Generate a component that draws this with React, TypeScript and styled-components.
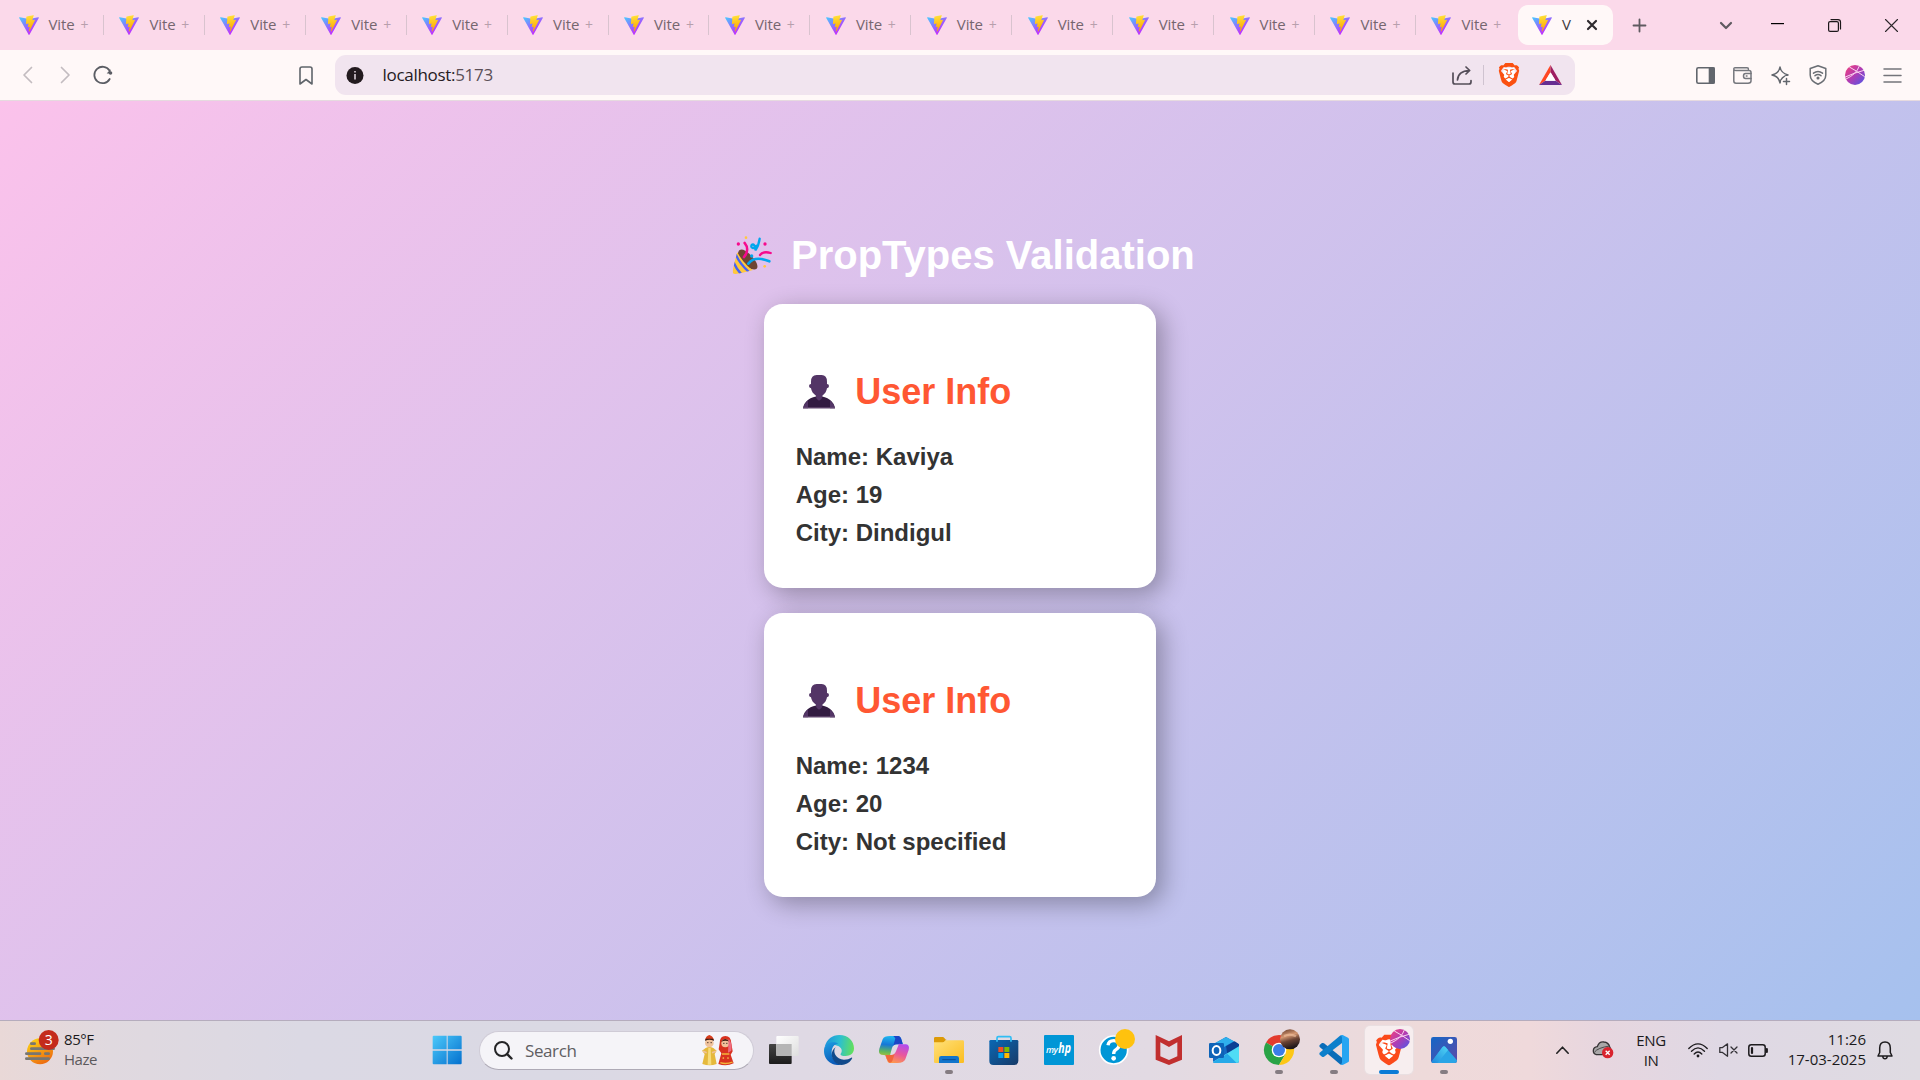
import React from "react";
import styled, { createGlobalStyle } from "styled-components";
import { SiBrave } from "react-icons/si";

const Global = createGlobalStyle`
  * { box-sizing: border-box; }
  html, body { margin: 0; padding: 0; }
  body { width: 1920px; height: 1080px; overflow: hidden; font-family: "Liberation Sans", Arial, sans-serif; }
  svg { display: block; flex: none; overflow: visible; }
`;

const uiFont = `"Open Sans", "Noto Sans", sans-serif`;

const Screen = styled.div`
  width: 1920px;
  height: 1080px;
  display: flex;
  flex-direction: column;
`;

/* ---------- tab strip ---------- */
const TabStrip = styled.header`
  height: 50px;
  background: #fbd9ea;
  display: flex;
  align-items: center;
  font: 400 15px/20px ${uiFont};
  color: #75666f;
`;
const Tabs = styled.div`
  width: 1518px;
  height: 50px;
  padding-left: 3px;
  display: flex;
  align-items: center;
`;
const Tab = styled.div<{ $last?: boolean }>`
  width: 100.93px;
  height: 20px;
  flex: none;
  padding-left: 15.5px;
  display: flex;
  align-items: center;
  border-right: 1px solid ${(p) => (p.$last ? "transparent" : "#d9c3cf")};
`;
const TabLabel = styled.span<{ $active?: boolean }>`
  margin-left: 10px;
  padding-bottom: 2px;
  letter-spacing: -0.1px;
  white-space: pre;
  color: ${(p) => (p.$active ? "#3f3a3e" : "inherit")};
`;
const Faded = styled.span`
  margin-left: 2px;
  opacity: 0.5;
  font-size: 14px;
`;
const ActiveTab = styled.div`
  width: 94.5px;
  height: 40px;
  padding-left: 14px;
  border-radius: 10px;
  background: #fff8f8;
  display: flex;
  align-items: center;
`;
const TabClose = styled.div`
  margin-left: 16.5px;
`;
const Slot = styled.div<{ $w: number }>`
  width: ${(p) => p.$w}px;
  flex: none;
  display: flex;
  align-items: center;
  justify-content: center;
`;
const StripControls = styled.div`
  display: flex;
  align-items: center;
  flex: 1;
`;
const Push = styled.div`
  flex: 1;
`;

/* ---------- toolbar ---------- */
const Toolbar = styled.nav`
  height: 51px;
  background: #fff8f8;
  border-bottom: 1px solid #e6dadf;
  display: flex;
  align-items: center;
`;
const NavGroup = styled.div`
  width: 335px;
  padding-left: 8px;
  display: flex;
  align-items: center;
`;
const Address = styled.div`
  width: 1240px;
  height: 40px;
  border-radius: 11px;
  background: #f1e4ef;
  display: flex;
  align-items: center;
  padding-left: 11px;
`;
const Url = styled.span`
  margin-left: 18.5px;
  font: 400 17px/24px ${uiFont};
  letter-spacing: -0.3px;
  color: #251a22;
`;
const Port = styled.span`
  color: #5b4f57;
`;
const Divider = styled.div`
  width: 1px;
  height: 20px;
  background: #cfc3d0;
`;
const Extensions = styled.div`
  flex: 1;
  display: flex;
  justify-content: flex-end;
  padding-right: 9px;
`;

/* ---------- page ---------- */
const Page = styled.main`
  flex: 1;
  display: flex;
  flex-direction: column;
  align-items: center;
  padding-top: 131px;
  background: linear-gradient(135deg, #fbc2eb, #a6c1ee);
`;
const Title = styled.h1`
  width: 470px;
  margin: 0 0 26px;
  padding-left: 7px;
  display: flex;
  align-items: center;
  gap: 18.3px;
  font-size: 40px;
  line-height: 46px;
  color: #fff;
  white-space: nowrap;
`;
const Card = styled.section`
  width: 392px;
  height: 284px;
  margin-bottom: 25px;
  padding: 67px 30px 0 31.7px;
  border-radius: 18.75px;
  background: #fff;
  box-shadow: 6.25px 6.25px 25px rgba(0, 0, 0, 0.3);
`;
const CardTitle = styled.h2`
  margin: 0 0 25px;
  padding-left: 7.3px;
  display: flex;
  align-items: center;
  gap: 20.3px;
  font-size: 36px;
  line-height: 42px;
  color: #ff5733;
`;
const Field = styled.p`
  margin: 0;
  font-size: 24px;
  line-height: 38px;
  font-weight: 700;
  color: #333;
`;

/* ---------- taskbar ---------- */
const Taskbar = styled.footer`
  height: 60px;
  border-top: 1px solid #b5acbd;
  display: flex;
  align-items: flex-start;
  padding-top: 5px;
  font: 400 15px/20px ${uiFont};
  color: #1b1a1c;
  background: linear-gradient(90deg, #e9d8d7 0, #e0d9df 110px, #dbd9e4 300px, #dad9e4 560px, #dfd9e4 800px, #e2dae3 1150px, #eedada 1420px, #efd9db 1530px, #e7d6df 1600px, #dfd8e4 1720px, #dfdbe2 1920px);
`;
const Weather = styled.div`
  width: 419.5px;
  height: 48px;
  padding-left: 24px;
  display: flex;
  align-items: center;
`;
const Lines = styled.div<{ $align?: string; $w?: number; $ml?: number; $ls?: number; $lift?: number }>`
  display: flex;
  flex-direction: column;
  width: ${(p) => (p.$w ? p.$w + "px" : "auto")};
  margin-left: ${(p) => p.$ml ?? 0}px;
  padding-bottom: ${(p) => p.$lift ?? 0}px;
  text-align: ${(p) => p.$align ?? "left"};
  letter-spacing: ${(p) => p.$ls ?? -0.15}px;
`;
const Muted = styled.span`
  color: #5c595c;
`;
const SearchBox = styled.div`
  width: 274.5px;
  height: 39px;
  margin: 5px 3px 0 4.5px;
  padding: 0 19px 0 14px;
  border-radius: 20px;
  background: #f5f4f8;
  border: 1px solid #cfcbd6;
  border-bottom-color: #aeaab6;
  display: flex;
  align-items: center;
`;
const SearchText = styled.span`
  margin-left: 12px;
  font-size: 17px;
  letter-spacing: -0.4px;
  color: #5f5e62;
`;
const AppCell = styled.div`
  width: 55px;
  height: 48px;
  flex: none;
  display: flex;
  justify-content: center;
`;
const AppButton = styled.div<{ $active?: boolean }>`
  width: 48px;
  height: 48px;
  padding-top: 4px;
  border-radius: 5px;
  display: flex;
  flex-direction: column;
  align-items: center;
  background: ${(p) => (p.$active ? "#f7eeef" : "transparent")};
  box-shadow: ${(p) => (p.$active ? "0 0 0 1px #e9dfe1" : "none")};
`;
const Indicator = styled.div<{ $active?: boolean }>`
  width: ${(p) => (p.$active ? 20 : 8)}px;
  height: 4px;
  border-radius: 2px;
  background: ${(p) => (p.$active ? "#0b7bd6" : "#857c82")};
`;
const Tray = styled.div`
  margin-left: auto;
  height: 48px;
  display: flex;
  align-items: center;
  padding-right: 16px;
`;

const ViteLogo = () => (
  <svg width="20" height="20" viewBox="6 0 398 396" preserveAspectRatio="none">
    <defs>
      <linearGradient id="va" x1="6" y1="33" x2="235" y2="344" gradientUnits="userSpaceOnUse">
        <stop stopColor="#41D1FF" />
        <stop offset="1" stopColor="#BD34FE" />
      </linearGradient>
      <linearGradient id="vb" x1="194.6" y1="8.8" x2="236" y2="293" gradientUnits="userSpaceOnUse">
        <stop stopColor="#FFEA83" />
        <stop offset=".083" stopColor="#FFDD35" />
        <stop offset="1" stopColor="#FFA800" />
      </linearGradient>
    </defs>
    <path fill="url(#va)" d="M399.641 59.5246L215.643 388.545C211.844 395.338 202.084 395.378 198.228 388.618L10.5817 59.5563C6.38087 52.1896 12.6802 43.2665 21.0281 44.7586L205.223 77.6824C206.398 77.8924 207.601 77.8904 208.776 77.6763L389.119 44.8058C397.439 43.2894 403.768 52.1434 399.641 59.5246Z" />
    <path fill="url(#vb)" d="M292.965 1.5744L156.801 28.2552C154.563 28.6937 152.906 30.5903 152.771 32.8664L144.395 174.33C144.198 177.662 147.258 180.248 150.51 179.498L188.42 170.749C191.967 169.931 195.172 173.055 194.443 176.622L183.18 231.775C182.422 235.487 185.907 238.661 189.532 237.56L212.947 230.446C216.577 229.344 220.065 232.527 219.297 236.242L201.398 322.875C200.278 328.294 207.486 331.249 210.492 326.603L212.5 323.5L323.454 102.072C325.312 98.3645 322.108 94.137 318.036 94.9228L279.014 102.454C275.347 103.161 272.227 99.746 273.262 96.1583L298.731 7.86689C299.767 4.27314 296.636 0.855181 292.965 1.5744Z" />
  </svg>
);

const Stroke = ({ w, h, color = "#5f5a60", sw = 1.6, children }: { w: number; h: number; color?: string; sw?: number; children: React.ReactNode }) => (
  <svg width={w} height={h} viewBox={`0 0 ${w} ${h}`} fill="none" stroke={color} strokeWidth={sw} strokeLinecap="round" strokeLinejoin="round">
    {children}
  </svg>
);

const Avatar = ({ cx, cy, r }: { cx: number; cy: number; r: number }) => (
  <g transform={`translate(${cx} ${cy}) scale(${r / 30})`}>
    <circle r="30" fill="url(#avatarFill)" />
    <g fill="none" stroke="#fbd3f0" strokeWidth="3">
      <path d="M-29 6Q-4-6 27-14M-17-24Q2-14 29 5M-27 12Q4-2 13-27" />
    </g>
  </g>
);

const SharedDefs = () => (
  <svg width="0" height="0" style={{ position: "absolute" }}>
    <defs>
      <linearGradient id="avatarFill" x1="0" y1="0" x2="1" y2="1">
        <stop offset="0" stopColor="#f5407a" />
        <stop offset=".5" stopColor="#b03cb4" />
        <stop offset="1" stopColor="#4a58ea" />
      </linearGradient>
    </defs>
  </svg>
);

const PartyPopper = () => (
  <svg width="40.7" height="40" viewBox="36 46 122 120">
    <defs>
      <clipPath id="cone">
        <path d="M52 98C50 102 38 150 38 156Q38 164 47 163Q62 161 99 151C84 143 64 120 52 98Z" />
      </clipPath>
    </defs>
    <path d="M55 97C60 84 74 90 88 102C104 117 118 138 110 147C102 154 80 145 66 128C56 116 51 104 55 97Z" fill="#6d4534" />
    <g clipPath="url(#cone)">
      <rect x="34" y="90" width="80" height="80" fill="#ffc83d" />
      <path d="M47 104Q60 134 88 158M40 127Q50 150 66 166" stroke="#4562f5" strokeWidth="7" fill="none" />
    </g>
    <g fill="none" strokeWidth="8" strokeLinecap="round">
      <path d="M74 70C84 82 84 98 72 112" stroke="#f70a8d" />
      <path d="M120 106C126 98 138 96 152 100" stroke="#f70a8d" strokeWidth="7" />
      <path d="M85 132C98 115 122 114 148 125" stroke="#00a6ed" />
      <path d="M119 57C117 72 112 84 106 92C108 78 100 72 95 76C90 84 102 90 110 78" stroke="#00a6ed" strokeWidth="7" />
    </g>
    <circle cx="78" cy="54" r="4" fill="#ffc83d" />
    <circle cx="134" cy="140" r="4" fill="#ffc83d" />
    <circle cx="55" cy="73" r="5" fill="#f70a8d" />
    <circle cx="135" cy="73" r="5" fill="#f70a8d" />
    <circle cx="95" cy="109" r="5" fill="#00a6ed" />
  </svg>
);

const Bust = () => (
  <svg width="32" height="33.3" viewBox="249 464 96 100">
    <path d="M249 564C252 544 272 528 297 528S342 544 345 564Z" fill="#321b41" />
    <path d="M249 564Q252 550 264 540V564ZM345 564Q342 550 330 540V564Z" fill="#533566" />
    <path d="M249 561H345V564H249Z" fill="#6b5078" />
    <path d="M273 491V484Q273 464 290 464H305Q321 464 321 484V491Q327 491 327 497T321 504Q319 518 307 526V530Q307 536 297 541Q288 536 288 530V526Q275 518 273 504Q267 503 267 497T273 491Z" fill="#533566" />
  </svg>
);

type Art = { cx: number; art: React.ReactNode; running?: boolean; active?: boolean };

const apps: Art[] = [
  {
    cx: 1092,
    art: (
      <>
        <defs>
          <linearGradient id="tv" x1="0" y1="0" x2="1" y2="1"><stop stopColor="#fff" /><stop offset="1" stopColor="#dedede" /></linearGradient>
          <linearGradient id="tb" x1="0" y1="0" x2="0" y2="1"><stop stopColor="#454545" /><stop offset="1" stopColor="#1c1c1c" /></linearGradient>
        </defs>
        <rect x="1047" y="87" width="68" height="60" rx="3" fill="url(#tb)" />
        <rect x="1069" y="63" width="67" height="60" rx="3" fill="url(#tv)" />
        <path d="M1069 87H1115V123H1072Q1069 123 1069 120Z" fill="#b5b5b5" />
      </>
    ),
  },
  {
    cx: 117,
    art: (
      <>
        <defs>
          <linearGradient id="eg" x1="0" y1=".4" x2="1" y2=".5"><stop stopColor="#1c93dc" /><stop offset=".5" stopColor="#2cbfd0" /><stop offset="1" stopColor="#63e05a" /></linearGradient>
          <linearGradient id="eb" x1="0" y1="0" x2=".4" y2="1"><stop stopColor="#1e9de2" /><stop offset="1" stopColor="#0a5ab8" /></linearGradient>
        </defs>
        <path d="M74 96C80 72 97 60 118 60C145 60 162 79 162 100C162 117 149 123 137 123C126 123 120 120 122 116C129 108 125 96 112 92C96 86 80 88 74 96Z" fill="url(#eg)" />
        <path d="M73 98C82 80 104 78 116 86C106 84 95 96 95 112C95 134 112 150 126 149C98 155 66 134 73 98Z" fill="url(#eb)" />
        <path d="M107 97C96 110 108 134 132 134C142 134 148 131 154 128C158 127 157 131 154 134C144 149 122 155 108 144C92 132 91 107 107 97Z" fill="#114a8b" />
      </>
    ),
  },
  {
    cx: 282,
    art: (
      <>
        <defs>
          <linearGradient id="c1" x1=".3" y1="0" x2=".2" y2="1"><stop stopColor="#1eb6ef" /><stop offset=".35" stopColor="#1677d8" /><stop offset=".65" stopColor="#62b85a" /><stop offset="1" stopColor="#f0c51d" /></linearGradient>
          <linearGradient id="c2" x1=".7" y1="0" x2=".3" y2="1"><stop stopColor="#b14cf0" /><stop offset=".5" stopColor="#e9579d" /><stop offset="1" stopColor="#ff9b4a" /></linearGradient>
        </defs>
        <path d="M270 63H296Q302 64 305 76L309 88H290Q280 88 276 99L267 132Q263 143 256 121Q251 119 244 119Q234 116 238 101L248 73Q252 63 270 63Z" fill="url(#c1)" />
        <path d="M280 63H296Q302 64 305 76L308 88H291Q283 88 280 92L286 70Z" fill="#1b45c6" />
        <path d="M292 144H268Q262 142 260 132L256 120H274Q284 120 288 109L297 86Q301 87 308 88H318Q330 90 326 105L316 133Q312 144 292 144Z" fill="url(#c2)" />
        <path d="M257 120H275Q282 120 284 116L277 138Q273 146 266 142Q261 136 257 120Z" fill="#f0663c" />
      </>
    ),
  },
  {
    cx: 447,
    running: true,
    art: (
      <>
        <defs>
          <linearGradient id="fo" x1="0" y1="0" x2="1" y2="1"><stop stopColor="#ffe079" /><stop offset="1" stopColor="#fbbd1f" /></linearGradient>
        </defs>
        <path d="M402 70Q402 66 406 66H428Q431 66 433 69L439 76H402Z M402 74H440L430 84H402Z" fill="#dc9a07" />
        <path d="M402 82H428Q432 82 434 79L436 76H488Q492 76 492 80V141Q492 144 488 144H406Q402 144 402 141Z" fill="url(#fo)" />
        <path d="M417 144V130Q417 123 424 123H470Q477 123 477 130V144Z" fill="#1275cc" />
        <path d="M428 134H466" stroke="#0a4c95" strokeWidth="3" strokeLinecap="round" />
      </>
    ),
  },
  {
    cx: 611,
    art: (
      <>
        <defs>
          <linearGradient id="st" x1="0" y1="0" x2="1" y2="1"><stop stopColor="#0a68b4" /><stop offset="1" stopColor="#173a68" /></linearGradient>
        </defs>
        <path d="M567 79Q567 75 571 75H650Q654 75 654 79V138Q654 150 642 150H579Q567 150 567 138Z" fill="url(#st)" />
        <path d="M590 80V69Q590 65 594 65H628Q632 65 632 69V80" fill="none" stroke="#31bdf4" strokeWidth="5" />
        <path d="M594 96H609V111H594Z" fill="#f25022" />
        <path d="M612 96H627V111H612Z" fill="#7fba00" />
        <path d="M594 114H609V129H594Z" fill="#00a4ef" />
        <path d="M612 114H627V129H612Z" fill="#ffb900" />
      </>
    ),
  },
  {
    cx: 777,
    art: (
      <>
        <rect x="732" y="60" width="90" height="90" rx="3" fill="#0096d6" />
        <text x="738" y="113" fontSize="27" fontFamily="Open Sans, sans-serif" fontStyle="italic" fontWeight="600" fill="#fff" textLength="36">my</text>
        <text x="775" y="115" fontSize="42" fontFamily="Open Sans, sans-serif" fontStyle="italic" fontWeight="700" fill="#fff" textLength="38" lengthAdjust="spacingAndGlyphs">hp</text>
      </>
    ),
  },
  {
    cx: 942,
    art: (
      <>
        <circle cx="941" cy="105" r="42" fill="#0096d6" stroke="#fff" strokeWidth="5" />
        <path d="M924 91Q926 77 941 77Q957 77 957 91Q957 99 948 104Q941 108 941 117" fill="none" stroke="#fff" strokeWidth="10" />
        <circle cx="941" cy="130" r="7" fill="#fff" />
        <circle cx="975" cy="72" r="30" fill="#ffc20e" />
      </>
    ),
  },
  {
    cx: 87,
    art: (
      <path fillRule="evenodd" d="M47 60L87 79L126 60V134L87 150L47 134ZM61 82V124L87 135L112 124V82L87 96Z" fill="#c12f2f" />
    ),
  },
  {
    cx: 252,
    art: (
      <>
        <path d="M219 88L258 66L297 88V138Q297 144 291 144H225Q219 144 219 138Z" fill="#1469c3" />
        <path d="M222 86L258 66L282 79L240 103Z" fill="#2fb0ec" />
        <path d="M258 94L284 79L297 88V94L262 117Z" fill="#0b3f94" />
        <path d="M297 94V138Q297 144 291 144H225L219 140Z" fill="#4fdcf5" />
        <path d="M219 141L262 116L290 144H225Q219 144 219 141Z" fill="#26a9e8" />
        <rect x="207" y="84" width="45" height="45" rx="4" fill="#0d63b8" />
        <ellipse cx="229.500" cy="106.500" rx="11.500" ry="13.500" fill="none" stroke="#fff" strokeWidth="6" />
      </>
    ),
  },
  {
    cx: 417,
    running: true,
    art: (
      <>
        <defs>
          <linearGradient id="ph" x1="0" y1="0" x2=".3" y2="1"><stop stopColor="#5c3424" /><stop offset=".4" stopColor="#d69872" /><stop offset=".65" stopColor="#6b4334" /><stop offset="1" stopColor="#20181a" /></linearGradient>
        </defs>
        <path d="M417 105L378 82.500A45 45 0 0 1 456 82.500Z" fill="#e33b2e" />
        <path d="M378 82.500A45 45 0 0 0 417 150L437 116Z" fill="#29a346" />
        <path d="M456 82.500A45 45 0 0 1 417 150L437 116L417 84H457Z" fill="#fdc716" />
        <circle cx="417" cy="105" r="22" fill="#fff" />
        <circle cx="417" cy="105" r="18" fill="#3b7de8" />
        <circle cx="450" cy="73" r="30" fill="url(#ph)" />
        <path d="M432 63Q450 54 468 64" fill="none" stroke="#f1c3a1" strokeWidth="7" opacity=".6" />
      </>
    ),
  },
  {
    cx: 582,
    running: true,
    art: (
      <>
        <path d="M539 90L546 84Q549 83 552 85L606 128V148Q604 150 600 148L539 96Q537 93 539 90Z" fill="#0a6cb8" />
        <path d="M539 119L546 125Q549 127 552 125L606 84V62Q604 59 600 62L539 113Q537 116 539 119Z" fill="#0d7fcb" />
        <path d="M601 62Q604 59 608 60L624 68Q627 70 627 73V137Q627 140 624 142L608 150Q604 150 601 148Q606 148 606 142V68Q606 62 601 62Z" fill="#27a5f2" />
      </>
    ),
  },
  {
    cx: 747,
    running: true,
    active: true,
    art: (
      <>
        <path d="M727 76H767L772 106L747 136L722 106Z" fill="#fff" />
        <g transform="translate(701 59)"><SiBrave size={92} color="#fb4a1a" /></g>
        <Avatar cx={780} cy={72} r={30} />
      </>
    ),
  },
  {
    cx: 912,
    running: true,
    art: (
      <>
        <defs>
          <linearGradient id="pp" x1="0" y1="0" x2="1" y2="1"><stop stopColor="#1466c6" /><stop offset="1" stopColor="#5d4aa8" /></linearGradient>
          <linearGradient id="pm" x1="0" y1="1" x2="1" y2="0"><stop stopColor="#1d88dc" /><stop offset="1" stopColor="#4fd5f5" /></linearGradient>
        </defs>
        <rect x="873" y="66" width="78" height="78" rx="7" fill="url(#pp)" />
        <path d="M875 140L907 97Q912 91 917 97L951 136V137Q951 144 944 144H880Q876 144 875 140Z" fill="#2aa5e6" />
        <path d="M875 140L907 97Q912 91 917 97L924 105L893 144H880Q876 144 875 140Z" fill="url(#pm)" />
        <circle cx="931" cy="79" r="8" fill="#fff" />
      </>
    ),
  },
];

const SearchArt = () => (
  <svg width="32" height="31" viewBox="844 59 96 93">
    <path d="M855 98Q866 92 878 98L888 106L882 116L888 146Q867 154 845 146L852 116L844 106Z" fill="#e5b93c" />
    <path d="M863 98H870L872 148H861Z" fill="#f6dc7c" />
    <circle cx="866" cy="83" r="13" fill="#f0c29b" />
    <path d="M853 75Q855 62 866 59Q877 62 880 75Q866 69 853 75Z" fill="#d63d1c" />
    <path d="M853 77Q866 70 880 77L878 70H855Z" fill="#3a1a12" />
    <path d="M847 108L858 112M886 108L874 112" stroke="#f0c29b" strokeWidth="5" />
    <path d="M897 84Q897 62 914 62T932 84L936 108L930 118L939 144Q916 155 893 146L902 114L894 102Z" fill="#d8321f" />
    <circle cx="914" cy="84" r="12" fill="#f0c29b" />
    <path d="M901 80Q913 62 927 80Q914 72 901 80Z" fill="#3a1a12" />
    <path d="M924 70Q936 84 932 106L922 112Z" fill="#ee6a80" />
    <path d="M904 116H926M899 142Q916 148 936 140" stroke="#f2b53a" strokeWidth="4" fill="none" />
    <circle cx="908" cy="128" r="2.500" fill="#f8c84e" /><circle cx="922" cy="128" r="2.500" fill="#f8c84e" />
    <path d="M861 82H862M871 82H872M909 84H910M918 84H919" stroke="#2b1a18" strokeWidth="3" strokeLinecap="round" />
  </svg>
);

const TabStripView = () => (
  <TabStrip>
    <Tabs>
      {Array.from({ length: 15 }, (_, i) => (
        <Tab key={i} $last={i === 14}>
          <ViteLogo />
          <TabLabel>Vite <Faded>+</Faded></TabLabel>
        </Tab>
      ))}
    </Tabs>
    <ActiveTab>
      <ViteLogo />
      <TabLabel $active>V</TabLabel>
      <TabClose>
        <Stroke w={10} h={10} color="#2f2a2e" sw={2.2}><path d="M1 1L9 9M9 1L1 9" /></Stroke>
      </TabClose>
    </ActiveTab>
    <StripControls>
      <Slot $w={53}>
        <Stroke w={13} h={13} sw={1.8}><path d="M6.500 .5V12.500M.5 6.500H12.500" /></Stroke>
      </Slot>
      <Push />
      <Slot $w={48}>
        <Stroke w={12} h={7} sw={2.2}><path d="M1 1L6 6L11 1" /></Stroke>
      </Slot>
      <Slot $w={55}>
        <svg width="13" height="4"><path d="M0 0H13V1.200H0Z" fill="#000" /></svg>
      </Slot>
      <Slot $w={58}>
        <Stroke w={13} h={13} color="#1c171a" sw={1.2}>
          <rect x=".6" y="2.600" width="9.800" height="9.800" rx="1.500" />
          <path d="M3 .6H10Q12.500 .6 12.500 3V10" />
        </Stroke>
      </Slot>
      <Slot $w={57}>
        <Stroke w={13} h={13} color="#2c262a" sw={1.1}><path d="M.5 .5L12.500 12.500M12.500 .5L.5 12.500" /></Stroke>
      </Slot>
    </StripControls>
  </TabStrip>
);

const ToolbarView = () => (
  <Toolbar>
    <NavGroup>
      <Slot $w={38}><Stroke w={9} h={16} color="#c3bcc0" sw={1.7}><path d="M8.500 .5L1 8L8.500 15.500" /></Stroke></Slot>
      <Slot $w={38}><Stroke w={9} h={16} color="#c3bcc0" sw={1.7}><path d="M.5 .5L8 8L.5 15.500" /></Stroke></Slot>
      <Slot $w={38}>
        <Stroke w={19} h={18} color="#5b5d64" sw={1.8}>
          <path d="M15.700 13A8.200 8.200 0 1 1 15.500 4.600" />
          <circle cx="16.500" cy="7" r="1.800" fill="#5b5d64" stroke="none" />
          <path d="M16.500 3.200V7.500H12.700Z" fill="#5b5d64" stroke="none" />
        </Stroke>
      </Slot>
      <Push />
      <Slot $w={58}>
        <Stroke w={14} h={19} color="#60656b" sw={1.6}><path d="M1 3Q1 1 3 1H11Q13 1 13 3V18L7 13.500L1 18Z" /></Stroke>
      </Slot>
    </NavGroup>
    <Address>
      <svg width="18" height="18" viewBox="0 0 18 18">
        <circle cx="9" cy="9.500" r="8.500" fill="#231a1f" />
        <path d="M8.200 5H9.800V6.500H8.200ZM8.200 8H9.800V13.500H8.200Z" fill="#d9cdd6" />
      </svg>
      <Url>localhost:<Port>5173</Port></Url>
      <Push />
      <Slot $w={42}>
        <Stroke w={20} h={19} color="#544d58" sw={1.7}>
          <path d="M1 7V16Q1 18 3 18H17Q19 18 19 16V14.500M5.500 14Q6 5 17.500 4.500M14 1L17.700 4.500L14 8" />
        </Stroke>
      </Slot>
      <Divider />
      <Slot $w={49}>
        <svg width="24" height="24" viewBox="0 0 24 24">
          <path d="M7 5H17L18.500 12L12 20L5.500 12Z" fill="#fff" />
          <SiBrave size={24} color="#fb5010" />
        </svg>
      </Slot>
      <Slot $w={34}>
        <svg width="23" height="20" viewBox="0 0 69 60">
          <path d="M34.500 0L0 60L19 47L34.500 22Z" fill="#ff4724" />
          <path d="M34.500 0L69 60L50 47L34.500 22Z" fill="#9e1f63" />
          <path d="M0 60H69L50 47H19Z" fill="#662d91" />
          <path d="M34.500 22L50 47H19Z" fill="#fff" />
        </svg>
      </Slot>
      <Slot $w={8} />
    </Address>
    <Extensions>
      <Slot $w={38}>
        <Stroke w={19} h={17} color="#62666d" sw={1.6}><rect x=".8" y=".8" width="17.400" height="15.400" rx="1.500" /><path d="M13.500 1H18V16H13.500Z" fill="#62666d" /></Stroke>
      </Slot>
      <Slot $w={37}>
        <Stroke w={19} h={17} color="#75777d" sw={1.5}>
          <path d="M.8 3V14Q.8 16.200 3 16.200H15Q18 16.200 18 14V5.500Q18 3.500 16 3.500H3Q.8 3.500 .8 2T3 .8H14Q15.500 .8 15.500 2.500" />
          <path d="M18 6.500H12.500Q10.500 6.500 10.500 9T12.500 11.500H18M13.300 9H14" />
        </Stroke>
      </Slot>
      <Slot $w={38}>
        <Stroke w={19} h={19} color="#62666d" sw={1.5}>
          <path d="M9 1Q10 7 17 9Q10 10.500 9 17Q8 10.500 1 9Q8 7 9 1Z" />
          <path d="M15.500 12V19M12 15.500H19" stroke="#fff8f8" strokeWidth="4" />
          <path d="M15.500 12.500V18.500M12.500 15.500H18.500" />
        </Stroke>
      </Slot>
      <Slot $w={37}>
        <Stroke w={18} h={20} color="#6a6e74" sw={1.5}>
          <path d="M9 .8L16.800 3.500V10Q16.800 16 9 19.200Q1.200 16 1.200 10V3.500Z" />
          <path d="M4.500 8.200Q9 4.800 13.500 8.200M6 10.700Q9 8.500 12 10.700" />
          <circle cx="9" cy="13" r=".8" fill="#6a6e74" />
        </Stroke>
      </Slot>
      <Slot $w={37}>
        <svg width="20" height="20"><Avatar cx={10} cy={10} r={10} /></svg>
      </Slot>
      <Slot $w={38}>
        <Stroke w={19} h={15} color="#74747a" sw={1.5}><path d="M1 1H18M1 7.500H18M1 14H18" /></Stroke>
      </Slot>
    </Extensions>
  </Toolbar>
);

const users = [
  { name: "Kaviya", age: 19, city: "Dindigul" },
  { name: "1234", age: 20, city: "Not specified" },
];

const UserCard = ({ name, age, city }: { name: string; age: number; city: string }) => (
  <Card>
    <CardTitle><Bust /><span>User Info</span></CardTitle>
    <Field>Name: {name}</Field>
    <Field>Age: {age}</Field>
    <Field>City: {city}</Field>
  </Card>
);

const TaskbarView = () => (
  <Taskbar>
    <Weather>
      <svg width="36" height="40" viewBox="72 38 108 120">
        <defs>
          <linearGradient id="sun" x1=".2" y1="0" x2=".8" y2="1"><stop stopColor="#fcd116" /><stop offset="1" stopColor="#ec6410" /></linearGradient>
        </defs>
        <circle cx="120" cy="102" r="39" fill="url(#sun)" />
        <path d="M94 79H104M94 94H161M79 109H120M136 109H146M79 124H146" stroke="#777671" strokeWidth="8" strokeLinecap="round" />
        <circle cx="146" cy="68" r="30" fill="#c42b1c" />
        <text x="146" y="84" textAnchor="middle" fontFamily="Open Sans, sans-serif" fontSize="42" fill="#fff">3</text>
      </svg>
      <Lines $ml={4} $ls={-0.45} $lift={2}><span>85°F</span><Muted>Haze</Muted></Lines>
    </Weather>
    <AppCell>
      <AppButton>
        <svg width="40" height="40" viewBox="22 47 120 120">
          <defs>
            <linearGradient id="win" gradientUnits="userSpaceOnUse" x1="39" y1="64" x2="126" y2="150"><stop stopColor="#4cc9fa" /><stop offset="1" stopColor="#0470ce" /></linearGradient>
          </defs>
          <path d="M39 67Q39 64 42 64H81V105H39ZM84 64H123Q126 64 126 67V105H84ZM39 109H81V150H42Q39 150 39 147ZM84 109H126V147Q126 150 123 150H84Z" fill="url(#win)" />
        </svg>
      </AppButton>
    </AppCell>
    <SearchBox>
      <Stroke w={19} h={19} color="#242426" sw={2}><circle cx="8" cy="8" r="7" /><path d="M13 13L17.500 17.500" strokeWidth="2.400" /></Stroke>
      <SearchText>Search</SearchText>
      <Push />
      <SearchArt />
    </SearchBox>
    {apps.map(({ cx, art, running, active }) => (
      <AppCell key={cx}>
        <AppButton $active={active}>
          <svg width="40" height="40" viewBox={`${cx - 60} 45 120 120`}>{art}</svg>
          {running && <Indicator $active={active} />}
        </AppButton>
      </AppCell>
    ))}
    <Tray>
      <Slot $w={40}><Stroke w={13} h={8} color="#222" sw={1.6}><path d="M.8 7.200L6.500 1.200L12.200 7.200" /></Stroke></Slot>
      <Slot $w={42}>
        <svg width="20" height="20" viewBox="218 80 60 60">
          <path d="M228 124Q218 121 219 111Q220 101 231 100Q236 84 251 86Q264 87 268 100L272 110L246 124Z" fill="#a9a7a8" stroke="#353234" strokeWidth="4" />
          <path d="M222 117Q232 103 268 98" stroke="#4c494b" strokeWidth="3" fill="none" />
          <circle cx="262" cy="118" r="17" fill="#d9232e" />
          <path d="M256 112L268 124M268 112L256 124" stroke="#fff" strokeWidth="4" />
        </svg>
      </Slot>
      <Lines $w={54} $align="center" $ls={-0.4}><span>ENG</span><span>IN</span></Lines>
      <Slot $w={40}>
        <Stroke w={20} h={15} color="#1d1b1e" sw={1.4}>
          <path d="M.8 5.500Q10-3.800 19.200 5.500M3.500 8.200Q10 1.600 16.500 8.200M6.200 10.900Q10 7.200 13.800 10.900" />
          <circle cx="10" cy="13" r="1.400" fill="#1d1b1e" stroke="none" />
        </Stroke>
      </Slot>
      <Slot $w={20}>
        <Stroke w={19} h={14} color="#333136" sw={1.3}>
          <path d="M.8 4.600V9.400H3.500L8.500 13.200V.8L3.500 4.600ZM12 4L18 10M18 4L12 10" />
        </Stroke>
      </Slot>
      <Slot $w={40}>
        <Stroke w={20} h={13} color="#1d1b1e" sw={1.5}>
          <rect x=".8" y=".8" width="16.400" height="11.400" rx="2.500" />
          <path d="M18.800 5V8" strokeWidth="2.200" />
          <path d="M4 4V9" strokeWidth="2.200" />
        </Stroke>
      </Slot>
      <Lines $w={88} $align="right" $ls={0} $lift={2}><span>11:26</span><span>17-03-2025</span></Lines>
      <Slot $w={38}>
        <Stroke w={16} h={19} color="#1d1b1e" sw={1.5}>
          <path d="M1 15H15L13.300 11.500V7Q13.300 1 8 1T2.700 7V11.500ZM5.800 15.500Q6 17.800 8 17.800T10.200 15.500" />
        </Stroke>
      </Slot>
    </Tray>
  </Taskbar>
);

export default function App() {
  return (
    <Screen>
      <Global />
      <SharedDefs />
      <TabStripView />
      <ToolbarView />
      <Page>
        <Title><PartyPopper /><span>PropTypes Validation</span></Title>
        {users.map((u) => <UserCard key={u.name} {...u} />)}
      </Page>
      <TaskbarView />
    </Screen>
  );
}
